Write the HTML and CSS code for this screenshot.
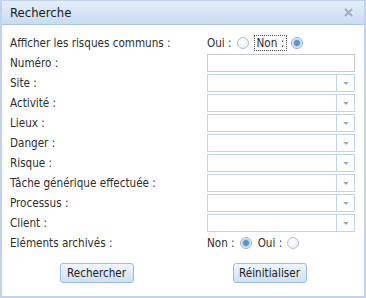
FILE: index.html
```html
<!DOCTYPE html>
<html lang="fr">
<head>
    <meta charset="UTF-8">
    <title>Recherche</title>
    <link rel="stylesheet" href="styles.css">
</head>
<body>
    <div class="dialog">
        <div class="dialog-header">
            <span class="dialog-title">Recherche</span>
            <svg class="dialog-close" width="9" height="9" viewBox="0 0 9 9">
                <path d="M1 1 L8 8 M8 1 L1 8" stroke="#a3adba" stroke-width="2"/>
            </svg>
        </div>
        <div class="dialog-body">
            <div class="form-grid">
                <div class="label">Afficher les risques communs :</div>
                <div class="radios">
                    <span>Oui :</span><span class="radio"></span>
                    <span class="focused">Non :</span><span class="radio checked"></span>
                </div>

                <div class="label">Numéro :</div>
                <div class="field text"></div>

                <div class="label">Site :</div>
                <div class="field combo"><span class="trigger"></span></div>

                <div class="label">Activité :</div>
                <div class="field combo"><span class="trigger"></span></div>

                <div class="label">Lieux :</div>
                <div class="field combo"><span class="trigger"></span></div>

                <div class="label">Danger :</div>
                <div class="field combo"><span class="trigger"></span></div>

                <div class="label">Risque :</div>
                <div class="field combo"><span class="trigger"></span></div>

                <div class="label">Tâche générique effectuée :</div>
                <div class="field combo"><span class="trigger"></span></div>

                <div class="label">Processus :</div>
                <div class="field combo"><span class="trigger"></span></div>

                <div class="label">Client :</div>
                <div class="field combo"><span class="trigger"></span></div>

                <div class="label">Eléments archivés :</div>
                <div class="radios">
                    <span>Non :</span><span class="radio checked"></span>
                    <span>Oui :</span><span class="radio"></span>
                </div>
            </div>
            <div class="buttons">
                <div class="btn-cell"><button class="btn">Rechercher</button></div>
                <div class="btn-cell"><button class="btn">Réinitialiser</button></div>
            </div>
        </div>
    </div>
</body>
</html>
```

FILE: styles.css
```css
html, body {
    margin: 0;
    padding: 0;
}
body {
    font-family: "DejaVu Sans Condensed", "DejaVu Sans", sans-serif;
    font-size: 11.6px;
    color: #2e2e2e;
    background: #fff;
}
.dialog {
    width: 366px;
    height: 298px;
    box-sizing: border-box;
    border: 2px solid #c3d4ea;
    border-top-width: 1px;
    background: #fff;
    display: flex;
    flex-direction: column;
}
.dialog-header {
    height: 24px;
    box-sizing: border-box;
    background: linear-gradient(#e3eefa, #c9dcf3);
    border-bottom: 1px solid #a9c4e6;
    display: flex;
    align-items: center;
    justify-content: space-between;
    padding: 0 11px 0 8px;
}
.dialog-title {
    font-size: 13px;
    color: #1a1a1a;
}
.dialog-close {
    display: block;
}
.dialog-body {
    padding: 9px 8px 0 8px;
}
.form-grid {
    display: grid;
    grid-template-columns: 197px 148px;
    grid-auto-rows: 18px;
    row-gap: 2px;
    align-items: center;
}
.label {
    line-height: 18px;
    white-space: nowrap;
}
.radios {
    display: flex;
    align-items: center;
    gap: 5px;
}
.radios .radio + span {
    margin-left: 1px;
}
.focused {
    outline: 1px dotted #555;
    padding: 0 2px;
}
.radio {
    width: 12px;
    height: 12px;
    box-sizing: border-box;
    border-radius: 50%;
    border: 1px solid #b4c2d2;
    background: radial-gradient(circle at 40% 35%, #ffffff, #e3eaf2);
    display: inline-block;
}
.radio.checked {
    border-color: #9cb2cc;
    background: radial-gradient(circle, #5b93cf 0 2.5px, #b9d1ec 3.5px, #eaf2fa 5px);
}
.field {
    height: 18px;
    box-sizing: border-box;
    background: #fff;
    position: relative;
}
.field.text {
    border: 1px solid #c6c9cf;
}
.field.combo {
    border: 1px solid #c2d3ea;
}
.trigger {
    position: absolute;
    top: 0;
    right: 0;
    bottom: 0;
    width: 17px;
    border-left: 1px solid #c2d3ea;
}
.trigger::after {
    content: "";
    position: absolute;
    left: 6px;
    top: 7px;
    border-left: 3px solid transparent;
    border-right: 3px solid transparent;
    border-top: 3px solid #9aabc0;
}
.buttons {
    display: grid;
    grid-template-columns: 1fr 1fr;
    margin-top: 11px;
}
.btn-cell {
    display: flex;
    justify-content: center;
}
.btn {
    font-family: inherit;
    font-size: 11.6px;
    color: #222;
    width: 74px;
    height: 20px;
    padding: 0;
    border: 1px solid #99bbe8;
    border-radius: 3px;
    background: linear-gradient(#f0f6fd, #cfe0f5);
}
```
